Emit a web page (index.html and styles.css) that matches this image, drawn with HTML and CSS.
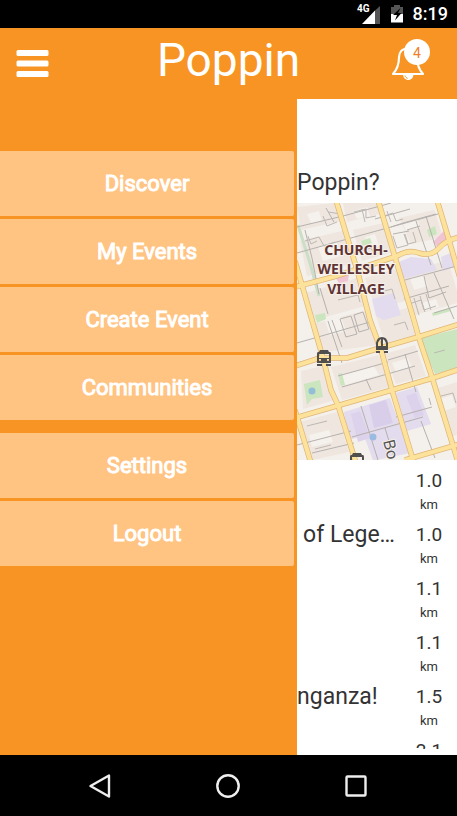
FILE: index.html
```html
<!DOCTYPE html>
<html lang="en">
<head>
<meta charset="utf-8">
<meta name="viewport" content="width=device-width, initial-scale=1">
<title>Poppin</title>
<link rel="stylesheet" href="styles.css">
</head>
<body>
<div class="app">
  <div class="status">
    <svg class="status-signal" viewBox="0 0 24 22" aria-hidden="true">
      <path fill="#555" d="M18 7.500 23 3v18h-5z"/>
      <path fill="#fff" d="M5 21 18 7.500V21z"/>
      <text x="0" y="9">4G</text>
    </svg>
    <svg class="status-battery" viewBox="0 0 14 20" aria-hidden="true">
      <path fill="#555" d="M1 3h3V1h6v2h3v10H1z"/>
      <path fill="#fff" d="M1 10h12v8.500H1z"/>
      <path fill="#000" d="M10.500 4 3 11h4l-2 5.500L11.500 9H8z"/>
    </svg>
    <span class="status-time">8:19</span>
  </div>

  <header class="header">
    <button class="icon-button" aria-label="Menu">
      <svg class="burger" viewBox="0 0 32 28" aria-hidden="true">
        <rect width="32" height="6" rx="1.500"/>
        <rect y="10.500" width="32" height="6" rx="1.500"/>
        <rect y="21" width="32" height="6" rx="1.500"/>
      </svg>
    </button>
    <h1 class="brand">Poppin</h1>
    <button class="icon-button bell-button" aria-label="Notifications">
      <svg class="bell" viewBox="0 0 34 36" aria-hidden="true">
        <path fill="none" stroke="#fff" stroke-width="2.200" stroke-linejoin="round" d="M17 2.500c-6 0-9 3.500-9 9C8 19 6.500 23 2 28h30C27.500 23 26 19 26 11.500c0-5.500-3-9-9-9z"/>
        <path fill="#fff" d="M12 28h10.500c0 3.800-2.300 6-5.200 6S12 31.800 12 28z"/>
        <path fill="none" stroke="#f79423" stroke-width="1" d="M14 29.500c.3 1.500 1.300 2.500 2.700 2.800"/>
      </svg>
      <span class="badge">4</span>
    </button>
  </header>

  <main class="body">
    <nav class="drawer">
      <div class="menu-group">
        <button class="menu-item">Discover</button>
        <button class="menu-item">My Events</button>
        <button class="menu-item">Create Event</button>
        <button class="menu-item">Communities</button>
      </div>
      <div class="menu-group">
        <button class="menu-item">Settings</button>
        <button class="menu-item">Logout</button>
      </div>
    </nav>

    <section class="content">
      <h2 class="content-title">Poppin?</h2>
      <svg class="map" viewBox="0 0 160 257" preserveAspectRatio="xMidYMid slice" role="img" aria-label="Map of Church-Wellesley Village">
        <rect width="160" height="257" fill="#f4f0eb"/>
        <g fill="#eee6df">
          <path d="M0 4 38 0l6 18-40 9zM46 0h36l4 10-36 9zM3 38l46-11 9 33-48 13zM56 27l35-8 9 29-35 10zM9 90l51-15 8 28-50 14zM68 75l31-9 9 32-29 8zM104 68l47-10 9 30v12l-42 12zM102 15l35-8 9 27-32 7zM17 121l53-14 10 35-52 7zM79 113l31-8 8 27-30 8zM4 168l22-5 12 34-32 9zM34 164l48-12 10 32-47 13zM88 151l30-9 11 31-30 8zM3 219l37-10 12 40-37 8zM138 186l22-7v53l-7 2z"/>
        </g>
        <g fill="#f5f1ed">
          <path d="M10 11l12-3 3 10-11 2zM56 8l14-4 3 9-13 3zM21 44l19-5 4 14-18 5zM68 34l10-3 4 12-9 3zM113 75l14-3 4 11-14 4zM28 118l16-4 5 14-16 4zM41 173l36-10 5 9-37 11zM12 232l20-5 4 12-21 5zM106 20l14-4 3 8-14 4zM125 100l14-4 3 8-14 4zM95 160l16-5 4 9-16 5zM143 196l12-4 4 12-12 4z"/>
        </g>
        <g fill="#e3dbee">
          <path d="M102 59l12-5 20 2 6 11-34 9zM144 54l12-5 4 10v4l-14 5zM75 96l22-6 7 22-17 5-8-4zM47 209l46-14 20 55-34 7H76l-9-24-16 4zM99 190l21-6 14 37-24 7z"/>
        </g>
        <path fill="#d9ceea" d="M72 202l17-5 7 23-19 5z"/>
        <path fill="#ddd2eb" d="M54 211l9-3 10 27-12 4zM109 193l10-3 8 22-9 3z"/>
        <path fill="#f0c4d3" d="M136 39l12-12 2 10-8 8zM38 74l14-3-1 7-9 2z"/>
        <g fill="#cbe5bf">
          <path d="M130 27l8-4 2 8-8 3zM122 136l38-10v39l-22 6zM7 181l16-4 3 17-11 2-5 6zM18 112l10-2 1 6-9 4zM64 38l9-3 2 5-9 3zM41 171l4-1 3 12-4 1zM135 110l18-5 1 3-18 5z"/>
        </g>
        <path fill="none" stroke="#cbdfc6" stroke-width="3" d="M1 22l12 38 9 33"/>
        <g fill="none" stroke="#b6b1ad" stroke-width="1">
          <path d="M0 24l46-11 30-8 18-5M0 50l54-15 40-11 47-13M45 14l16 55M94 24l12-4 33-9M78 16l35-10M29 5l8 14M8 27l7 28 7 36M23 85l8 26M0 140l35-10 38-11M31 118l14 42M35 117l10 27M43 116l11-3 6 18-11 3zM57 112l9-3 6 17-10 3zM119 18l15 44M129 13l16 52M110 27l13-4M96 31l16-3M137 70l20 46M108 77l52-14M107 96l45-13M127 73l5 22 17-6M137 110l23-7M41 173l36-10 14-4M45 184l49-14 24-7M0 160l28-7M91 157l30-9M108 151l11 38M69 176l5 11M64 203l17 54M99 214l36-10M55 234l71-20M0 242l54-14M124 218l14 37M134 202l-2-7M88 225l9 29M15 250l42-10"/>
        </g>
        <g fill="none" stroke="#bdb8b3" stroke-width="1">
          <path d="M8 38l14-4 5 9 11-4M26 13l4 10 10-4M31 9l13 2M11 33l3 8 6-3M57 9l12-3v9l10-2M65 6l3 13M87 13l9-3 3 8 7-2M90 8l4 11M61 49l13-4 4 8M96 33l4 12 11-3-4-11M108 31l3 10 8-2-3-10M112 101l12-4 3 10 12-4M117 95l5 17M123 93l5 16M129 91l5 16M41 97l20-5 2 7M80 90l15-4 3 10M10 223l20-5M18 246l16-4M97 122l11-3 3 8M137 150l11-3M144 193l12-3 3 10"/>
        </g>
        <g fill="none" stroke="#e0b574" stroke-width="5.600" stroke-linejoin="round">
          <path d="M-2 58 5 82 15 117 26 155 34 187 41 202 59 260M39-3 61 70 73 117 85 150 95 187 117 260M81-3 98 54 116 114 122 135 135 174 162 262M140-3 152 37 163 75M-2 207 14 260"/>
          <path d="M-2 84 36 74 61 66 100 53Q112 46 122 50Q134 54 142 45Q149 37 163 34M-2 163 23 155 50 155 83 145 121 134 163 121M-2 215 43 202 95 187 136 175 163 166M108 257 163 241"/>
        </g>
        <g fill="none" stroke="#fce29b" stroke-width="4.200" stroke-linejoin="round">
          <path d="M-2 58 5 82 15 117 26 155 34 187 41 202 59 260M39-3 61 70 73 117 85 150 95 187 117 260M81-3 98 54 116 114 122 135 135 174 162 262M140-3 152 37 163 75M-2 207 14 260"/>
          <path d="M-2 84 36 74 61 66 100 53Q112 46 122 50Q134 54 142 45Q149 37 163 34M-2 163 23 155 50 155 83 145 121 134 163 121M-2 215 43 202 95 187 136 175 163 166M108 257 163 241"/>
        </g>
        <circle cx="15" cy="188" r="3.500" fill="#94bdd8"/>
        <circle cx="76" cy="234" r="3.500" fill="#9cbbe0"/>
        <path fill="#514e4e" fill-rule="evenodd" d="M23 147h8l1 2h1q1 0 1 2v9H20v-9q0-2 1-2h1zM22 151h10v4H22zM22 156h2v2h-2zM30 156h2v2h-2zM20 161h5v2h-5zM29 161h5v2h-5z"/>
        <path fill="#514e4e" fill-rule="evenodd" d="M79 147v-7q1-6 6-6t6 6v7zM81 143v-3q1-3 3-4v7zM86 143v-7q2 1 3 4v3zM79 148h4v2h-4zM87 148h4v2h-4z"/>
        <path fill="#514e4e" fill-rule="evenodd" d="M56 250h8l1 2h1q1 0 1 2v3H53v-3q0-2 1-2h1zM55 254h10v3H55z"/>
        <g class="map-label">
          <text x="59" y="52">CHURCH-</text>
          <text x="59" y="71">WELLESLEY</text>
          <text x="59" y="91">VILLAGE</text>
        </g>
        <text class="street-label" transform="translate(86 238) rotate(76)">Bo</text>
      </svg>
      <ul class="list">
        <li class="row"><span class="event"></span><span class="distance">1.0<small>km</small></span></li>
        <li class="row"><span class="event">e of Lege…</span><span class="distance">1.0<small>km</small></span></li>
        <li class="row"><span class="event"></span><span class="distance">1.1<small>km</small></span></li>
        <li class="row"><span class="event"></span><span class="distance">1.1<small>km</small></span></li>
        <li class="row"><span class="event event-start">nganza!</span><span class="distance">1.5<small>km</small></span></li>
        <li class="row"><span class="event"></span><span class="distance">2.1</span></li>
      </ul>
    </section>
  </main>

  <footer class="navbar">
    <button class="nav-button" aria-label="Back">
      <svg viewBox="0 0 26 26" aria-hidden="true"><path d="M22 2.500v21L3.500 13z"/></svg>
    </button>
    <button class="nav-button" aria-label="Home">
      <svg viewBox="0 0 26 26" aria-hidden="true"><circle cx="13" cy="13" r="10.700"/></svg>
    </button>
    <button class="nav-button" aria-label="Recent apps">
      <svg viewBox="0 0 26 26" aria-hidden="true"><rect x="3.500" y="3.500" width="19" height="19" rx="1"/></svg>
    </button>
  </footer>
</div>
</body>
</html>
```
FILE: styles.css
```css
* {
  box-sizing: border-box;
}

body {
  margin: 0;
  font-family: Roboto, "Liberation Sans", sans-serif;
  color: #333;
  background: #000;
}

button {
  border: 0;
  padding: 0;
  background: none;
  font: inherit;
  color: inherit;
}

.app {
  display: flex;
  flex-direction: column;
  height: 100vh;
}

.status {
  display: flex;
  align-items: center;
  justify-content: flex-end;
  gap: 9px;
  height: 28px;
  padding-right: 9px;
  color: #fff;
}

.status-signal {
  width: 24px;
  height: 22px;
}

.status-signal text {
  font-size: 10px;
  font-weight: 700;
  fill: #fff;
}

.status-battery {
  width: 14px;
  height: 20px;
}

.status-time {
  font-size: 18px;
  font-weight: 500;
  line-height: 26px;
}

.header {
  display: grid;
  grid-template-columns: 1fr auto 1fr;
  height: 71px;
  padding: 0 16px;
  background: #f79423;
  color: #fff;
}

.icon-button {
  justify-self: start;
  align-self: center;
  display: flex;
}

.burger {
  width: 33px;
  height: 28px;
  fill: #fff;
}

.brand {
  margin: 0;
  font-size: 46px;
  font-weight: 400;
  line-height: 64px;
}

.bell-button {
  position: relative;
  justify-self: end;
  margin-right: 16px;
}

.bell {
  width: 34px;
  height: 36px;
}

.badge {
  position: absolute;
  top: -7px;
  right: -5px;
  width: 26px;
  height: 26px;
  border-radius: 50%;
  background: #fff;
  color: #f07f2c;
  font-size: 14px;
  line-height: 28px;
  text-align: center;
}

.body {
  display: grid;
  grid-template-columns: 65% 1fr;
  flex: 1;
  min-height: 0;
}

.drawer {
  display: flex;
  flex-direction: column;
  gap: 13px;
  padding: 52px 3px 0 0;
  background: #f79423;
}

.menu-group {
  display: flex;
  flex-direction: column;
  gap: 3px;
}

.menu-item {
  height: 65px;
  border-radius: 0 2px 2px 0;
  background: #ffc382;
  color: #fff;
  font-size: 22px;
  -webkit-text-stroke: 1px #fff;
}

.content {
  display: flex;
  flex-direction: column;
  min-width: 0;
  padding-bottom: 6px;
  overflow: hidden;
  background: #fff;
}

.content-title {
  margin: 0;
  padding-top: 68px;
  font-size: 23px;
  font-weight: 400;
  line-height: 32px;
  height: 104px;
}

.map {
  flex: none;
  width: 100%;
  height: 257px;
}

.map-label {
  font-family: "Noto Sans", sans-serif;
  font-size: 14px;
  font-weight: 700;
  text-anchor: middle;
  fill: #5e3433;
  stroke: #f7f1ec;
  stroke-width: 2px;
  paint-order: stroke;
}

.street-label {
  font-family: "Noto Sans", sans-serif;
  font-size: 16px;
  fill: #555;
  stroke: #f7f1ec;
  stroke-width: 2px;
  paint-order: stroke;
}

.list {
  flex: 1;
  min-height: 0;
  margin: 0;
  padding: 0;
  overflow: hidden;
  list-style: none;
}

.row {
  display: flex;
  height: 54px;
  padding: 5px 12px 0 0;
}

.event {
  display: flex;
  flex: 1;
  justify-content: flex-end;
  min-width: 0;
  padding-right: 18px;
  overflow: hidden;
  font-size: 23px;
  line-height: 32px;
  white-space: nowrap;
}

.event-start {
  justify-content: flex-start;
}

.distance {
  flex: none;
  width: 32px;
  font-size: 19px;
  line-height: 32px;
  text-align: center;
}

.distance small {
  display: block;
  font-size: 13px;
  line-height: 16px;
}

.navbar {
  display: flex;
  align-items: center;
  justify-content: center;
  gap: 102px;
  height: 61px;
  padding-right: 2px;
}

.nav-button {
  display: flex;
}

.nav-button svg {
  width: 26px;
  height: 26px;
  fill: none;
  stroke: #eee;
  stroke-width: 2.4;
  stroke-linejoin: round;
}
```
